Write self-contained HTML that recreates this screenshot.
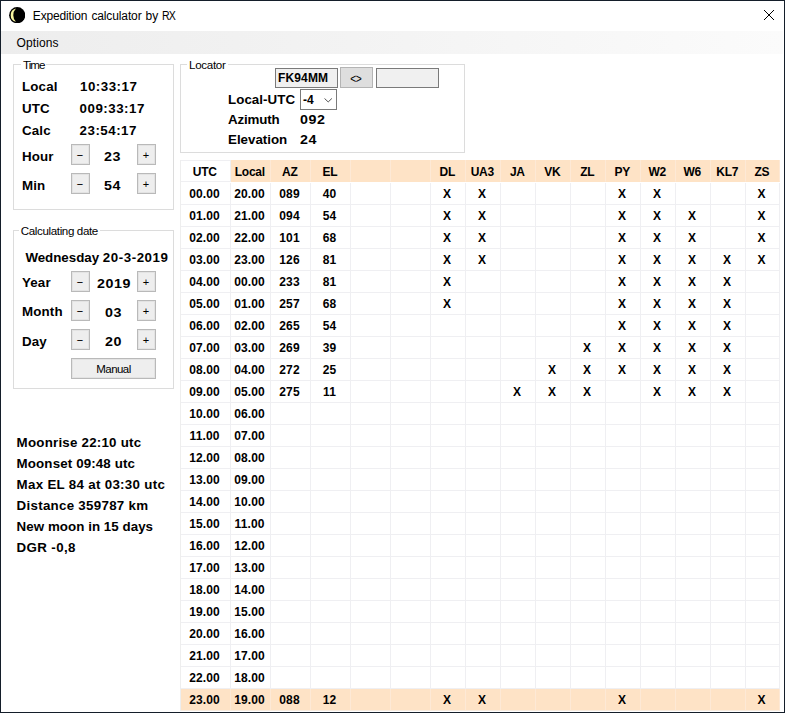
<!DOCTYPE html>
<html><head><meta charset="utf-8"><title>Expedition calculator by RX</title>
<style>
html,body{margin:0;padding:0;}
body{width:785px;height:713px;background:#fff;position:relative;overflow:hidden;font-family:"Liberation Sans",Arial,sans-serif;color:#000;}
.abs{position:absolute;}
#win{position:absolute;left:0;top:0;width:785px;height:713px;box-sizing:border-box;border:1px solid #141e2a;}
#title{position:absolute;left:1px;top:1px;width:783px;height:30px;background:#fff;}
#title .t{position:absolute;left:32.4px;top:7px;font-size:12px;line-height:16px;white-space:nowrap;letter-spacing:-0.12px;}
#menu{position:absolute;left:1px;top:31px;width:782px;height:23px;background:linear-gradient(to right,#ededed 0%,#f3f3f3 45%,#fbfbfb 100%);}
#menu .t{position:absolute;left:15.5px;top:4px;font-size:12px;line-height:16px;letter-spacing:0.12px;}
.gb{position:absolute;border:1px solid #dcdcdc;box-sizing:border-box;}
.gbl{position:absolute;font-size:11.6px;line-height:14px;background:#fff;padding:0 2px;white-space:nowrap;letter-spacing:-0.3px;}
.b{position:absolute;font-weight:bold;font-size:13.33px;line-height:16px;white-space:nowrap;letter-spacing:0.15px;}
.btn{position:absolute;box-sizing:border-box;border:1px solid #b9b9b9;background:#eeeeee;box-shadow:inset 0 0 0 1px #e3e3e3;font-size:11px;text-align:center;}
.btn i{font-style:normal;display:inline-block;transform:scaleX(2.0);position:relative;left:-1px;top:1px;}
.n{letter-spacing:0.5px;}
.s{transform:scaleX(1.07);transform-origin:0 0;margin-left:-0.5px;}
.gr{position:absolute;left:181px;width:600px;height:22px;}
.gr .c{position:absolute;top:0;line-height:23px;font-weight:bold;font-size:12px;letter-spacing:0.12px;text-align:center;border-right:1px solid #efeff2;border-bottom:1px solid #efeff2;box-sizing:content-box;height:21px;text-indent:-2px;overflow:hidden;}
.gr.hd .c{line-height:24px;font-size:12px;text-indent:-1.4px;letter-spacing:-0.25px;}
.gr.hd .c{background:#fee3c6;border-color:#fde9d6;border-bottom-color:#fee3c6;}
.gr.hd .c.w{background:#fff;border-color:#efeff2;box-shadow:inset 0 1px 0 #efeff2;}
.gr.last .c{background:#fee3c6;border-color:#fde9d6;border-bottom-color:#f8ece0;}
</style></head><body>
<div id="win"></div>
<div id="title">
<svg class="abs" style="left:7.8px;top:5.6px" width="16.4" height="16.4" viewBox="0 0 17 17"><circle cx="8.5" cy="8.5" r="8.4" fill="#000"/><path d="M7.2 1.6 A7.1 7.1 0 0 0 7.2 15.4 A10 10 0 0 1 7.2 1.6Z" fill="#f6f4a0"/></svg>
<span class="t" style="left:31.8px;letter-spacing:-0.15px">Expedition </span><span class="t" style="left:90.4px;letter-spacing:-0.12px">calculator </span><span class="t" style="left:144.6px;letter-spacing:0.1px">by </span><span class="t" style="left:161px;letter-spacing:-1px;font-size:12px;transform:scaleX(0.88);transform-origin:0 0">RX</span>
<svg class="abs" style="left:762px;top:8px" width="12" height="12" viewBox="0 0 12 12"><path d="M1 1 L11 11 M11 1 L1 11" stroke="#000" stroke-width="1" fill="none"/></svg>
</div>
<div id="menu"><span class="t">Options</span></div>

<!-- Time -->
<div class="gb" style="left:13px;top:64px;width:161px;height:146px"></div>
<span class="gbl" style="left:21px;top:58px;letter-spacing:-1px">Time</span>
<span class="b" style="left:22px;top:79px">Local</span><span class="b n" style="left:80px;top:79px">10:33:17</span>
<span class="b" style="left:22px;top:101px">UTC</span><span class="b n" style="left:79.6px;top:101px">009:33:17</span>
<span class="b" style="left:22px;top:123px">Calc</span><span class="b n" style="left:79.6px;top:123px">23:54:17</span>
<span class="b" style="left:22px;top:149px">Hour</span><span class="b n s" style="left:104px;top:149px">23</span>
<span class="b" style="left:22px;top:178px">Min</span><span class="b n s" style="left:104px;top:178px">54</span>
<div class="btn" style="left:71px;top:144px;width:19px;height:21px;line-height:17px"><i>-</i></div>
<div class="btn" style="left:137px;top:144px;width:19px;height:21px;line-height:20px;padding-right:1px">+</div>
<div class="btn" style="left:71px;top:173px;width:19px;height:21px;line-height:17px"><i>-</i></div>
<div class="btn" style="left:137px;top:173px;width:19px;height:21px;line-height:20px;padding-right:1px">+</div>

<!-- Calculating date -->
<div class="gb" style="left:13px;top:230px;width:161px;height:159px"></div>
<span class="gbl" style="left:18.8px;top:224px;letter-spacing:-0.38px">Calculating date</span>
<span class="b" style="left:25.4px;top:250px;letter-spacing:-0.02px">Wednesday <span style="letter-spacing:0.56px">20-3-2019</span></span>
<span class="b" style="left:22px;top:275px">Year</span><span class="b n s" style="left:97px;top:276px">2019</span>
<span class="b" style="left:22px;top:304px">Month</span><span class="b n s" style="left:105px;top:305px">03</span>
<span class="b" style="left:22px;top:334px">Day</span><span class="b n s" style="left:105px;top:334px">20</span>
<div class="btn" style="left:71px;top:271px;width:19px;height:21px;line-height:17px"><i>-</i></div>
<div class="btn" style="left:137px;top:271px;width:19px;height:21px;line-height:20px;padding-right:1px">+</div>
<div class="btn" style="left:71px;top:300px;width:19px;height:21px;line-height:17px"><i>-</i></div>
<div class="btn" style="left:137px;top:300px;width:19px;height:21px;line-height:20px;padding-right:1px">+</div>
<div class="btn" style="left:71px;top:329px;width:19px;height:21px;line-height:17px"><i>-</i></div>
<div class="btn" style="left:137px;top:329px;width:19px;height:21px;line-height:20px;padding-right:1px">+</div>
<div class="btn" style="left:71px;top:358px;width:85px;height:21px;line-height:20px;font-size:11.5px;letter-spacing:-0.55px">Manual</div>

<!-- Locator -->
<div class="gb" style="left:180px;top:64px;width:285px;height:89px"></div>
<span class="gbl" style="left:187px;top:58px">Locator</span>
<div class="abs" style="left:275px;top:68px;width:63px;height:20px;box-sizing:border-box;border:1px solid #7a7a7a;background:#f0f0f0"></div>
<span class="b" style="left:278px;top:70px;font-size:12px">FK94MM</span>
<div class="btn" style="left:340px;top:67px;width:33px;height:21px;line-height:22px;font-size:12.5px;background:#dedede;border-color:#b4b4b4;box-shadow:none"><b style="font-weight:normal;display:inline-block;transform:scaleX(0.82);letter-spacing:-0.5px;position:relative;left:-0.5px">&lt;&gt;</b></div>
<div class="abs" style="left:376px;top:68px;width:63px;height:20px;box-sizing:border-box;border:1px solid #7a7a7a;background:#f0f0f0"></div>
<span class="b" style="left:228px;top:92px;letter-spacing:0.05px">Local-UTC</span>
<div class="abs" style="left:300px;top:89px;width:37px;height:21px;box-sizing:border-box;border:1px solid #7a7a7a;background:#fff"></div>
<span class="b" style="left:303px;top:92px;font-size:12px;letter-spacing:0">-4</span>
<svg class="abs" style="left:324px;top:98px" width="8.4" height="4.6" viewBox="0 0 9 5"><path d="M0.5 0.5 L4.5 4.3 L8.5 0.5" stroke="#444" stroke-width="1" fill="none"/></svg>
<span class="b" style="left:228px;top:112px;letter-spacing:-0.15px">Azimuth</span><span class="b n s" style="left:300px;top:112px">092</span>
<span class="b" style="left:228px;top:132px;letter-spacing:0px">Elevation</span><span class="b n s" style="left:300px;top:132px">24</span>

<!-- info -->
<span class="b" style="left:16.6px;top:435px;letter-spacing:0.22px">Moonrise 22:10 utc</span>
<span class="b" style="left:16.6px;top:456px;letter-spacing:0.13px">Moonset 09:48 utc</span>
<span class="b" style="left:16.6px;top:477px;letter-spacing:0.3px">Max EL 84 at 03:30 utc</span>
<span class="b" style="left:16.6px;top:498px;letter-spacing:0.28px">Distance 359787 km</span>
<span class="b" style="left:16.6px;top:519px;letter-spacing:0.05px">New moon in 15 days</span>
<span class="b" style="left:16.6px;top:540px;letter-spacing:0.36px">DGR -0,8</span>

<!-- grid -->
<div class="abs" style="left:180px;top:160px;width:1px;height:551px;background:#eeeeee"></div>
<div class="gr hd" style="top:160px"><span class="c w" style="left:0px;width:49px">UTC</span><span class="c" style="left:50px;width:39px">Local</span><span class="c" style="left:90px;width:39px">AZ</span><span class="c" style="left:130px;width:39px">EL</span><span class="c" style="left:170px;width:39px"></span><span class="c" style="left:210px;width:39px"></span><span class="c" style="left:250px;width:34px">DL</span><span class="c" style="left:285px;width:34px">UA3</span><span class="c" style="left:320px;width:34px">JA</span><span class="c" style="left:355px;width:34px">VK</span><span class="c" style="left:390px;width:34px">ZL</span><span class="c" style="left:425px;width:34px">PY</span><span class="c" style="left:460px;width:34px">W2</span><span class="c" style="left:495px;width:34px">W6</span><span class="c" style="left:530px;width:34px">KL7</span><span class="c" style="left:565px;width:33px">ZS</span></div>
<div class="gr " style="top:183px"><span class="c" style="left:0px;width:49px">00.00</span><span class="c" style="left:50px;width:39px">20.00</span><span class="c" style="left:90px;width:39px">089</span><span class="c" style="left:130px;width:39px">40</span><span class="c" style="left:170px;width:39px"></span><span class="c" style="left:210px;width:39px"></span><span class="c" style="left:250px;width:34px">X</span><span class="c" style="left:285px;width:34px">X</span><span class="c" style="left:320px;width:34px"></span><span class="c" style="left:355px;width:34px"></span><span class="c" style="left:390px;width:34px"></span><span class="c" style="left:425px;width:34px">X</span><span class="c" style="left:460px;width:34px">X</span><span class="c" style="left:495px;width:34px"></span><span class="c" style="left:530px;width:34px"></span><span class="c" style="left:565px;width:33px">X</span></div>
<div class="gr " style="top:205px"><span class="c" style="left:0px;width:49px">01.00</span><span class="c" style="left:50px;width:39px">21.00</span><span class="c" style="left:90px;width:39px">094</span><span class="c" style="left:130px;width:39px">54</span><span class="c" style="left:170px;width:39px"></span><span class="c" style="left:210px;width:39px"></span><span class="c" style="left:250px;width:34px">X</span><span class="c" style="left:285px;width:34px">X</span><span class="c" style="left:320px;width:34px"></span><span class="c" style="left:355px;width:34px"></span><span class="c" style="left:390px;width:34px"></span><span class="c" style="left:425px;width:34px">X</span><span class="c" style="left:460px;width:34px">X</span><span class="c" style="left:495px;width:34px">X</span><span class="c" style="left:530px;width:34px"></span><span class="c" style="left:565px;width:33px">X</span></div>
<div class="gr " style="top:227px"><span class="c" style="left:0px;width:49px">02.00</span><span class="c" style="left:50px;width:39px">22.00</span><span class="c" style="left:90px;width:39px">101</span><span class="c" style="left:130px;width:39px">68</span><span class="c" style="left:170px;width:39px"></span><span class="c" style="left:210px;width:39px"></span><span class="c" style="left:250px;width:34px">X</span><span class="c" style="left:285px;width:34px">X</span><span class="c" style="left:320px;width:34px"></span><span class="c" style="left:355px;width:34px"></span><span class="c" style="left:390px;width:34px"></span><span class="c" style="left:425px;width:34px">X</span><span class="c" style="left:460px;width:34px">X</span><span class="c" style="left:495px;width:34px">X</span><span class="c" style="left:530px;width:34px"></span><span class="c" style="left:565px;width:33px">X</span></div>
<div class="gr " style="top:249px"><span class="c" style="left:0px;width:49px">03.00</span><span class="c" style="left:50px;width:39px">23.00</span><span class="c" style="left:90px;width:39px">126</span><span class="c" style="left:130px;width:39px">81</span><span class="c" style="left:170px;width:39px"></span><span class="c" style="left:210px;width:39px"></span><span class="c" style="left:250px;width:34px">X</span><span class="c" style="left:285px;width:34px">X</span><span class="c" style="left:320px;width:34px"></span><span class="c" style="left:355px;width:34px"></span><span class="c" style="left:390px;width:34px"></span><span class="c" style="left:425px;width:34px">X</span><span class="c" style="left:460px;width:34px">X</span><span class="c" style="left:495px;width:34px">X</span><span class="c" style="left:530px;width:34px">X</span><span class="c" style="left:565px;width:33px">X</span></div>
<div class="gr " style="top:271px"><span class="c" style="left:0px;width:49px">04.00</span><span class="c" style="left:50px;width:39px">00.00</span><span class="c" style="left:90px;width:39px">233</span><span class="c" style="left:130px;width:39px">81</span><span class="c" style="left:170px;width:39px"></span><span class="c" style="left:210px;width:39px"></span><span class="c" style="left:250px;width:34px">X</span><span class="c" style="left:285px;width:34px"></span><span class="c" style="left:320px;width:34px"></span><span class="c" style="left:355px;width:34px"></span><span class="c" style="left:390px;width:34px"></span><span class="c" style="left:425px;width:34px">X</span><span class="c" style="left:460px;width:34px">X</span><span class="c" style="left:495px;width:34px">X</span><span class="c" style="left:530px;width:34px">X</span><span class="c" style="left:565px;width:33px"></span></div>
<div class="gr " style="top:293px"><span class="c" style="left:0px;width:49px">05.00</span><span class="c" style="left:50px;width:39px">01.00</span><span class="c" style="left:90px;width:39px">257</span><span class="c" style="left:130px;width:39px">68</span><span class="c" style="left:170px;width:39px"></span><span class="c" style="left:210px;width:39px"></span><span class="c" style="left:250px;width:34px">X</span><span class="c" style="left:285px;width:34px"></span><span class="c" style="left:320px;width:34px"></span><span class="c" style="left:355px;width:34px"></span><span class="c" style="left:390px;width:34px"></span><span class="c" style="left:425px;width:34px">X</span><span class="c" style="left:460px;width:34px">X</span><span class="c" style="left:495px;width:34px">X</span><span class="c" style="left:530px;width:34px">X</span><span class="c" style="left:565px;width:33px"></span></div>
<div class="gr " style="top:315px"><span class="c" style="left:0px;width:49px">06.00</span><span class="c" style="left:50px;width:39px">02.00</span><span class="c" style="left:90px;width:39px">265</span><span class="c" style="left:130px;width:39px">54</span><span class="c" style="left:170px;width:39px"></span><span class="c" style="left:210px;width:39px"></span><span class="c" style="left:250px;width:34px"></span><span class="c" style="left:285px;width:34px"></span><span class="c" style="left:320px;width:34px"></span><span class="c" style="left:355px;width:34px"></span><span class="c" style="left:390px;width:34px"></span><span class="c" style="left:425px;width:34px">X</span><span class="c" style="left:460px;width:34px">X</span><span class="c" style="left:495px;width:34px">X</span><span class="c" style="left:530px;width:34px">X</span><span class="c" style="left:565px;width:33px"></span></div>
<div class="gr " style="top:337px"><span class="c" style="left:0px;width:49px">07.00</span><span class="c" style="left:50px;width:39px">03.00</span><span class="c" style="left:90px;width:39px">269</span><span class="c" style="left:130px;width:39px">39</span><span class="c" style="left:170px;width:39px"></span><span class="c" style="left:210px;width:39px"></span><span class="c" style="left:250px;width:34px"></span><span class="c" style="left:285px;width:34px"></span><span class="c" style="left:320px;width:34px"></span><span class="c" style="left:355px;width:34px"></span><span class="c" style="left:390px;width:34px">X</span><span class="c" style="left:425px;width:34px">X</span><span class="c" style="left:460px;width:34px">X</span><span class="c" style="left:495px;width:34px">X</span><span class="c" style="left:530px;width:34px">X</span><span class="c" style="left:565px;width:33px"></span></div>
<div class="gr " style="top:359px"><span class="c" style="left:0px;width:49px">08.00</span><span class="c" style="left:50px;width:39px">04.00</span><span class="c" style="left:90px;width:39px">272</span><span class="c" style="left:130px;width:39px">25</span><span class="c" style="left:170px;width:39px"></span><span class="c" style="left:210px;width:39px"></span><span class="c" style="left:250px;width:34px"></span><span class="c" style="left:285px;width:34px"></span><span class="c" style="left:320px;width:34px"></span><span class="c" style="left:355px;width:34px">X</span><span class="c" style="left:390px;width:34px">X</span><span class="c" style="left:425px;width:34px">X</span><span class="c" style="left:460px;width:34px">X</span><span class="c" style="left:495px;width:34px">X</span><span class="c" style="left:530px;width:34px">X</span><span class="c" style="left:565px;width:33px"></span></div>
<div class="gr " style="top:381px"><span class="c" style="left:0px;width:49px">09.00</span><span class="c" style="left:50px;width:39px">05.00</span><span class="c" style="left:90px;width:39px">275</span><span class="c" style="left:130px;width:39px">11</span><span class="c" style="left:170px;width:39px"></span><span class="c" style="left:210px;width:39px"></span><span class="c" style="left:250px;width:34px"></span><span class="c" style="left:285px;width:34px"></span><span class="c" style="left:320px;width:34px">X</span><span class="c" style="left:355px;width:34px">X</span><span class="c" style="left:390px;width:34px">X</span><span class="c" style="left:425px;width:34px"></span><span class="c" style="left:460px;width:34px">X</span><span class="c" style="left:495px;width:34px">X</span><span class="c" style="left:530px;width:34px">X</span><span class="c" style="left:565px;width:33px"></span></div>
<div class="gr " style="top:403px"><span class="c" style="left:0px;width:49px">10.00</span><span class="c" style="left:50px;width:39px">06.00</span><span class="c" style="left:90px;width:39px"></span><span class="c" style="left:130px;width:39px"></span><span class="c" style="left:170px;width:39px"></span><span class="c" style="left:210px;width:39px"></span><span class="c" style="left:250px;width:34px"></span><span class="c" style="left:285px;width:34px"></span><span class="c" style="left:320px;width:34px"></span><span class="c" style="left:355px;width:34px"></span><span class="c" style="left:390px;width:34px"></span><span class="c" style="left:425px;width:34px"></span><span class="c" style="left:460px;width:34px"></span><span class="c" style="left:495px;width:34px"></span><span class="c" style="left:530px;width:34px"></span><span class="c" style="left:565px;width:33px"></span></div>
<div class="gr " style="top:425px"><span class="c" style="left:0px;width:49px">11.00</span><span class="c" style="left:50px;width:39px">07.00</span><span class="c" style="left:90px;width:39px"></span><span class="c" style="left:130px;width:39px"></span><span class="c" style="left:170px;width:39px"></span><span class="c" style="left:210px;width:39px"></span><span class="c" style="left:250px;width:34px"></span><span class="c" style="left:285px;width:34px"></span><span class="c" style="left:320px;width:34px"></span><span class="c" style="left:355px;width:34px"></span><span class="c" style="left:390px;width:34px"></span><span class="c" style="left:425px;width:34px"></span><span class="c" style="left:460px;width:34px"></span><span class="c" style="left:495px;width:34px"></span><span class="c" style="left:530px;width:34px"></span><span class="c" style="left:565px;width:33px"></span></div>
<div class="gr " style="top:447px"><span class="c" style="left:0px;width:49px">12.00</span><span class="c" style="left:50px;width:39px">08.00</span><span class="c" style="left:90px;width:39px"></span><span class="c" style="left:130px;width:39px"></span><span class="c" style="left:170px;width:39px"></span><span class="c" style="left:210px;width:39px"></span><span class="c" style="left:250px;width:34px"></span><span class="c" style="left:285px;width:34px"></span><span class="c" style="left:320px;width:34px"></span><span class="c" style="left:355px;width:34px"></span><span class="c" style="left:390px;width:34px"></span><span class="c" style="left:425px;width:34px"></span><span class="c" style="left:460px;width:34px"></span><span class="c" style="left:495px;width:34px"></span><span class="c" style="left:530px;width:34px"></span><span class="c" style="left:565px;width:33px"></span></div>
<div class="gr " style="top:469px"><span class="c" style="left:0px;width:49px">13.00</span><span class="c" style="left:50px;width:39px">09.00</span><span class="c" style="left:90px;width:39px"></span><span class="c" style="left:130px;width:39px"></span><span class="c" style="left:170px;width:39px"></span><span class="c" style="left:210px;width:39px"></span><span class="c" style="left:250px;width:34px"></span><span class="c" style="left:285px;width:34px"></span><span class="c" style="left:320px;width:34px"></span><span class="c" style="left:355px;width:34px"></span><span class="c" style="left:390px;width:34px"></span><span class="c" style="left:425px;width:34px"></span><span class="c" style="left:460px;width:34px"></span><span class="c" style="left:495px;width:34px"></span><span class="c" style="left:530px;width:34px"></span><span class="c" style="left:565px;width:33px"></span></div>
<div class="gr " style="top:491px"><span class="c" style="left:0px;width:49px">14.00</span><span class="c" style="left:50px;width:39px">10.00</span><span class="c" style="left:90px;width:39px"></span><span class="c" style="left:130px;width:39px"></span><span class="c" style="left:170px;width:39px"></span><span class="c" style="left:210px;width:39px"></span><span class="c" style="left:250px;width:34px"></span><span class="c" style="left:285px;width:34px"></span><span class="c" style="left:320px;width:34px"></span><span class="c" style="left:355px;width:34px"></span><span class="c" style="left:390px;width:34px"></span><span class="c" style="left:425px;width:34px"></span><span class="c" style="left:460px;width:34px"></span><span class="c" style="left:495px;width:34px"></span><span class="c" style="left:530px;width:34px"></span><span class="c" style="left:565px;width:33px"></span></div>
<div class="gr " style="top:513px"><span class="c" style="left:0px;width:49px">15.00</span><span class="c" style="left:50px;width:39px">11.00</span><span class="c" style="left:90px;width:39px"></span><span class="c" style="left:130px;width:39px"></span><span class="c" style="left:170px;width:39px"></span><span class="c" style="left:210px;width:39px"></span><span class="c" style="left:250px;width:34px"></span><span class="c" style="left:285px;width:34px"></span><span class="c" style="left:320px;width:34px"></span><span class="c" style="left:355px;width:34px"></span><span class="c" style="left:390px;width:34px"></span><span class="c" style="left:425px;width:34px"></span><span class="c" style="left:460px;width:34px"></span><span class="c" style="left:495px;width:34px"></span><span class="c" style="left:530px;width:34px"></span><span class="c" style="left:565px;width:33px"></span></div>
<div class="gr " style="top:535px"><span class="c" style="left:0px;width:49px">16.00</span><span class="c" style="left:50px;width:39px">12.00</span><span class="c" style="left:90px;width:39px"></span><span class="c" style="left:130px;width:39px"></span><span class="c" style="left:170px;width:39px"></span><span class="c" style="left:210px;width:39px"></span><span class="c" style="left:250px;width:34px"></span><span class="c" style="left:285px;width:34px"></span><span class="c" style="left:320px;width:34px"></span><span class="c" style="left:355px;width:34px"></span><span class="c" style="left:390px;width:34px"></span><span class="c" style="left:425px;width:34px"></span><span class="c" style="left:460px;width:34px"></span><span class="c" style="left:495px;width:34px"></span><span class="c" style="left:530px;width:34px"></span><span class="c" style="left:565px;width:33px"></span></div>
<div class="gr " style="top:557px"><span class="c" style="left:0px;width:49px">17.00</span><span class="c" style="left:50px;width:39px">13.00</span><span class="c" style="left:90px;width:39px"></span><span class="c" style="left:130px;width:39px"></span><span class="c" style="left:170px;width:39px"></span><span class="c" style="left:210px;width:39px"></span><span class="c" style="left:250px;width:34px"></span><span class="c" style="left:285px;width:34px"></span><span class="c" style="left:320px;width:34px"></span><span class="c" style="left:355px;width:34px"></span><span class="c" style="left:390px;width:34px"></span><span class="c" style="left:425px;width:34px"></span><span class="c" style="left:460px;width:34px"></span><span class="c" style="left:495px;width:34px"></span><span class="c" style="left:530px;width:34px"></span><span class="c" style="left:565px;width:33px"></span></div>
<div class="gr " style="top:579px"><span class="c" style="left:0px;width:49px">18.00</span><span class="c" style="left:50px;width:39px">14.00</span><span class="c" style="left:90px;width:39px"></span><span class="c" style="left:130px;width:39px"></span><span class="c" style="left:170px;width:39px"></span><span class="c" style="left:210px;width:39px"></span><span class="c" style="left:250px;width:34px"></span><span class="c" style="left:285px;width:34px"></span><span class="c" style="left:320px;width:34px"></span><span class="c" style="left:355px;width:34px"></span><span class="c" style="left:390px;width:34px"></span><span class="c" style="left:425px;width:34px"></span><span class="c" style="left:460px;width:34px"></span><span class="c" style="left:495px;width:34px"></span><span class="c" style="left:530px;width:34px"></span><span class="c" style="left:565px;width:33px"></span></div>
<div class="gr " style="top:601px"><span class="c" style="left:0px;width:49px">19.00</span><span class="c" style="left:50px;width:39px">15.00</span><span class="c" style="left:90px;width:39px"></span><span class="c" style="left:130px;width:39px"></span><span class="c" style="left:170px;width:39px"></span><span class="c" style="left:210px;width:39px"></span><span class="c" style="left:250px;width:34px"></span><span class="c" style="left:285px;width:34px"></span><span class="c" style="left:320px;width:34px"></span><span class="c" style="left:355px;width:34px"></span><span class="c" style="left:390px;width:34px"></span><span class="c" style="left:425px;width:34px"></span><span class="c" style="left:460px;width:34px"></span><span class="c" style="left:495px;width:34px"></span><span class="c" style="left:530px;width:34px"></span><span class="c" style="left:565px;width:33px"></span></div>
<div class="gr " style="top:623px"><span class="c" style="left:0px;width:49px">20.00</span><span class="c" style="left:50px;width:39px">16.00</span><span class="c" style="left:90px;width:39px"></span><span class="c" style="left:130px;width:39px"></span><span class="c" style="left:170px;width:39px"></span><span class="c" style="left:210px;width:39px"></span><span class="c" style="left:250px;width:34px"></span><span class="c" style="left:285px;width:34px"></span><span class="c" style="left:320px;width:34px"></span><span class="c" style="left:355px;width:34px"></span><span class="c" style="left:390px;width:34px"></span><span class="c" style="left:425px;width:34px"></span><span class="c" style="left:460px;width:34px"></span><span class="c" style="left:495px;width:34px"></span><span class="c" style="left:530px;width:34px"></span><span class="c" style="left:565px;width:33px"></span></div>
<div class="gr " style="top:645px"><span class="c" style="left:0px;width:49px">21.00</span><span class="c" style="left:50px;width:39px">17.00</span><span class="c" style="left:90px;width:39px"></span><span class="c" style="left:130px;width:39px"></span><span class="c" style="left:170px;width:39px"></span><span class="c" style="left:210px;width:39px"></span><span class="c" style="left:250px;width:34px"></span><span class="c" style="left:285px;width:34px"></span><span class="c" style="left:320px;width:34px"></span><span class="c" style="left:355px;width:34px"></span><span class="c" style="left:390px;width:34px"></span><span class="c" style="left:425px;width:34px"></span><span class="c" style="left:460px;width:34px"></span><span class="c" style="left:495px;width:34px"></span><span class="c" style="left:530px;width:34px"></span><span class="c" style="left:565px;width:33px"></span></div>
<div class="gr " style="top:667px"><span class="c" style="left:0px;width:49px">22.00</span><span class="c" style="left:50px;width:39px">18.00</span><span class="c" style="left:90px;width:39px"></span><span class="c" style="left:130px;width:39px"></span><span class="c" style="left:170px;width:39px"></span><span class="c" style="left:210px;width:39px"></span><span class="c" style="left:250px;width:34px"></span><span class="c" style="left:285px;width:34px"></span><span class="c" style="left:320px;width:34px"></span><span class="c" style="left:355px;width:34px"></span><span class="c" style="left:390px;width:34px"></span><span class="c" style="left:425px;width:34px"></span><span class="c" style="left:460px;width:34px"></span><span class="c" style="left:495px;width:34px"></span><span class="c" style="left:530px;width:34px"></span><span class="c" style="left:565px;width:33px"></span></div>
<div class="gr last" style="top:689px"><span class="c" style="left:0px;width:49px">23.00</span><span class="c" style="left:50px;width:39px">19.00</span><span class="c" style="left:90px;width:39px">088</span><span class="c" style="left:130px;width:39px">12</span><span class="c" style="left:170px;width:39px"></span><span class="c" style="left:210px;width:39px"></span><span class="c" style="left:250px;width:34px">X</span><span class="c" style="left:285px;width:34px">X</span><span class="c" style="left:320px;width:34px"></span><span class="c" style="left:355px;width:34px"></span><span class="c" style="left:390px;width:34px"></span><span class="c" style="left:425px;width:34px">X</span><span class="c" style="left:460px;width:34px"></span><span class="c" style="left:495px;width:34px"></span><span class="c" style="left:530px;width:34px"></span><span class="c" style="left:565px;width:33px">X</span></div>
</body></html>
